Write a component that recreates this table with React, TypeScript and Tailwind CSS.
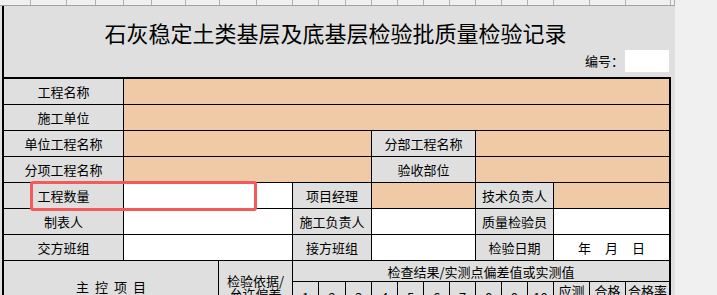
import React from 'react';

// widths of the spreadsheet columns shown in the strip above the form
const stripCols = [31, 36, 29, 28, 28, 34, 34, 37, 36, 26, 27, 26, 26, 26, 26, 26, 26, 26, 26, 36, 36, 45, 4];

interface CellProps {
  children?: React.ReactNode;
  className?: string;
}

const Cell: React.FC<CellProps> = ({ children, className = '' }) => (
  <div className={`flex items-center justify-center text-[13px] leading-none text-black ${className}`}>
    {children}
  </div>
);

const Label: React.FC<CellProps> = ({ children, className = '' }) => (
  <Cell className={`bg-[#dfdfdf] ${className}`}>{children}</Cell>
);

const Peach: React.FC<CellProps> = ({ className = '' }) => <Cell className={`bg-[#f0c9a6] ${className}`} />;

const Blank: React.FC<CellProps> = ({ children, className = '' }) => (
  <Cell className={`bg-white ${className}`}>{children}</Cell>
);

const App: React.FC = () => {
  return (
    <div className="relative w-[717px] h-[295px] overflow-hidden bg-[#f0f0f0] font-['Noto_Sans_CJK_SC',sans-serif]">
      <div className="w-[675px] h-full bg-[#dfdfdf]">
        {/* Sheet gridlines above the form */}
        <div className="grid h-[6px] bg-[#f0f0f0] border-b border-[#a3a3a3] grid-cols-[31px_36px_29px_28px_28px_34px_34px_37px_36px_26px_27px_26px_26px_26px_26px_26px_26px_26px_26px_36px_36px_45px_4px]">
          {stripCols.map((w, i) => (
            <div key={i} className="border-r border-[#b0b0b0]" />
          ))}
        </div>

        {/* Form */}
        <div className="ml-[2px] w-[669px] border-l-2 border-black">
          {/* Title */}
          <div className="flex flex-col h-[71px]">
            <div className="mt-[11px] h-[30px] flex items-center justify-center text-[22px] text-black pr-[4px]">
              石灰稳定土类基层及底基层检验批质量检验记录
            </div>
            <div className="mt-[3px] flex items-center justify-end gap-[1px]">
              <span className="text-[13px] text-black">编号：</span>
              <div className="w-[44px] h-[22px] bg-white mr-[2px]" />
            </div>
          </div>

          {/* Table body */}
          <div className="grid gap-px bg-black border-t-2 border-r-2 border-black grid-cols-[119px_94px_73px_25px_26px_25px_25px_25px_25px_25px_25px_25px_25px_35px_35px_43px] grid-rows-[25px_25px_25px_25px_25px_25px_25px_20px_30px_25px]">
            <Label>工程名称</Label>
            <Peach className="col-span-15" />

            <Label>施工单位</Label>
            <Peach className="col-span-15" />

            <Label>单位工程名称</Label>
            <Peach className="col-span-5" />
            <Label className="col-span-4">分部工程名称</Label>
            <Peach className="col-span-6" />

            <Label>分项工程名称</Label>
            <Peach className="col-span-5" />
            <Label className="col-span-4">验收部位</Label>
            <Peach className="col-span-6" />

            <Label>工程数量</Label>
            <Blank className="col-span-2" />
            <Label className="col-span-3">项目经理</Label>
            <Peach className="col-span-4" />
            <Label className="col-span-3">技术负责人</Label>
            <Peach className="col-span-3" />

            <Label>制表人</Label>
            <Blank className="col-span-2" />
            <Label className="col-span-3">施工负责人</Label>
            <Blank className="col-span-4" />
            <Label className="col-span-3">质量检验员</Label>
            <Blank className="col-span-3" />

            <Label>交方班组</Label>
            <Blank className="col-span-2" />
            <Label className="col-span-3">接方班组</Label>
            <Blank className="col-span-4" />
            <Label className="col-span-3">检验日期</Label>
            <Blank className="col-span-3 gap-[14px]">
              <span>年</span>
              <span>月</span>
              <span>日</span>
            </Blank>

            <Label className="col-span-2 row-span-2 gap-[6px]">
              <span>主</span>
              <span>控</span>
              <span>项</span>
              <span>目</span>
            </Label>
            <Label className="row-span-2 flex-col leading-[14px]">
              <span>检验依据/</span>
              <span>允许偏差</span>
            </Label>
            <Label className="col-span-13">检查结果/实测点偏差值或实测值</Label>

            {[1, 2, 3, 4, 5, 6, 7, 8, 9, 10].map((n) => (
              <Label key={n}>{n}</Label>
            ))}
            <Label className="flex-col leading-[15px]">
              <span>应测</span>
              <span>点数</span>
            </Label>
            <Label className="flex-col leading-[15px]">
              <span>合格</span>
              <span>点数</span>
            </Label>
            <Label className="flex-col leading-[15px]">
              <span>合格率</span>
              <span>(%)</span>
            </Label>

            <Label className="col-span-16" />
          </div>
        </div>
      </div>

      {/* Highlight around the quantity field */}
      <div className="absolute left-[30px] top-[181px] w-[227px] h-[30px] border-[3px] border-[#f55a5a] rounded-[3px]" />
    </div>
  );
};

export default App;
